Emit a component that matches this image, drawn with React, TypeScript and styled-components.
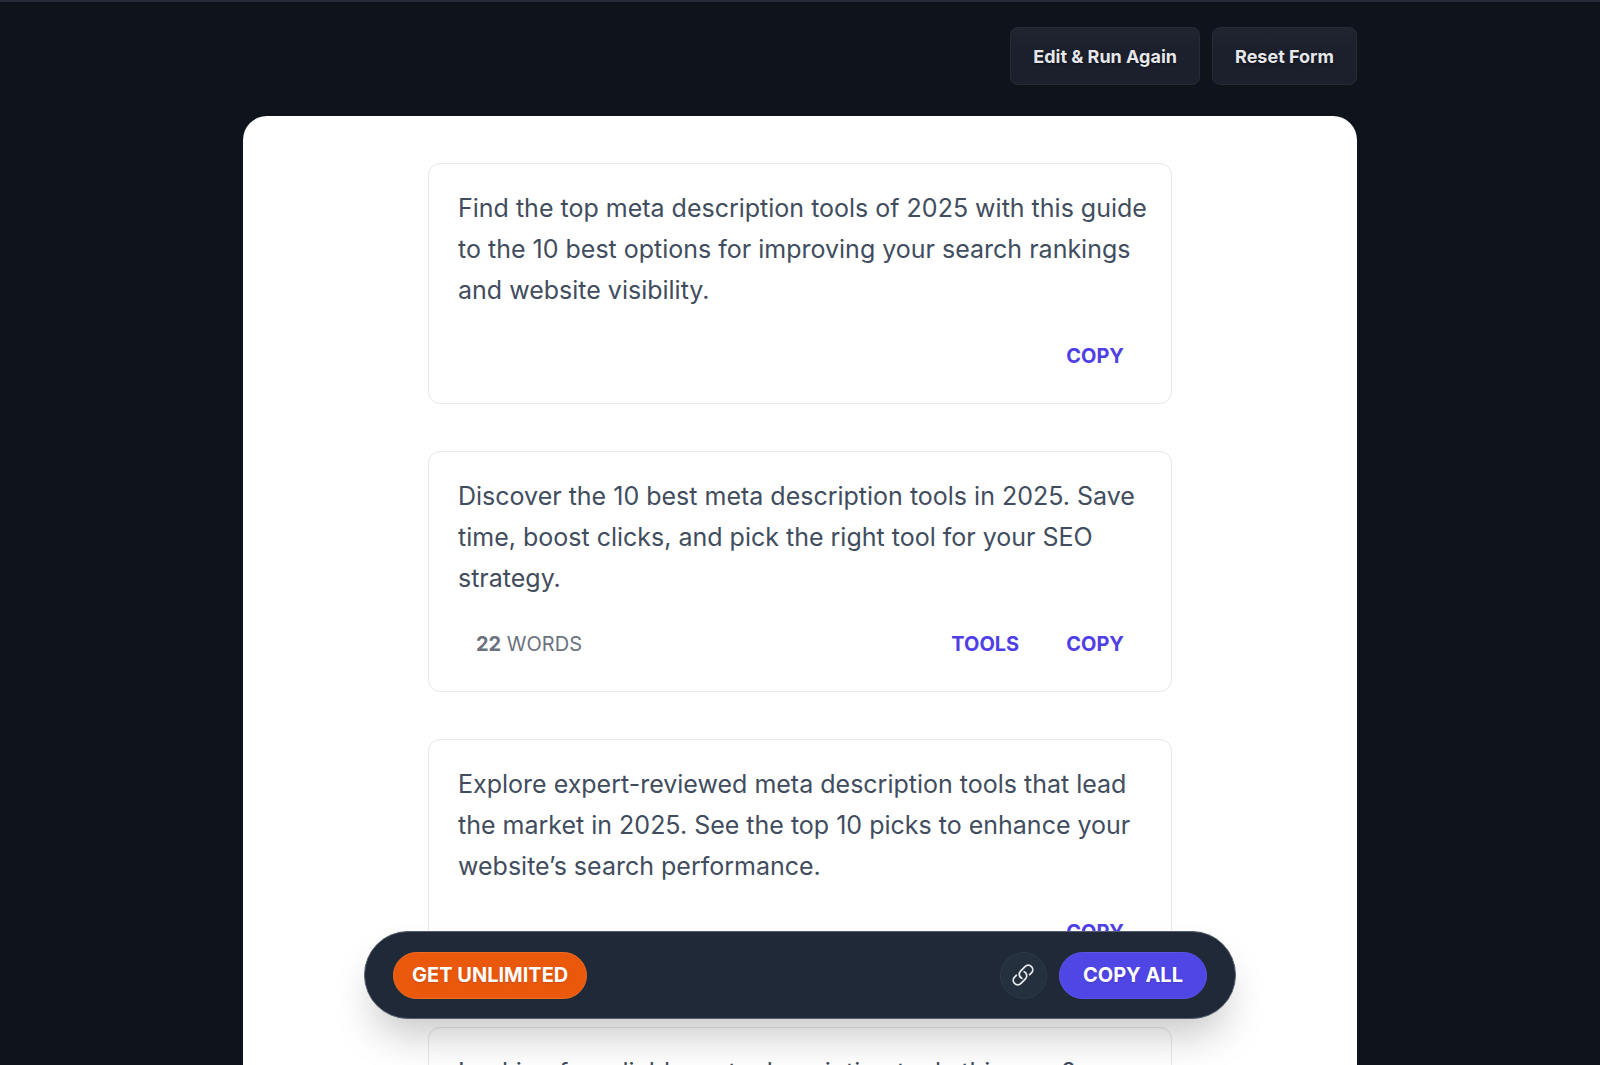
import React from "react";
import styled, { createGlobalStyle } from "styled-components";

const GlobalStyle = createGlobalStyle`
  *, *::before, *::after { box-sizing: border-box; }
  body {
    margin: 0;
    background: #0f131c;
    font-family: Inter, "Liberation Sans", sans-serif;
    -webkit-font-smoothing: antialiased;
  }
  button { font-family: inherit; cursor: pointer; }
`;

const Page = styled.main`
  height: 100vh;
  overflow: hidden;
  padding: 0 240px;
  border-top: 2px solid #262b37;
`;

const Content = styled.div`
  max-width: 1114px;
  margin: 0 auto;
`;

const Toolbar = styled.div`
  display: flex;
  justify-content: flex-end;
  gap: 12px;
  padding: 25px 0 31px;
`;

const ToolbarButton = styled.button`
  height: 58px;
  padding: 0 22px;
  border: 1px solid #262b36;
  border-radius: 8px;
  background: linear-gradient(#20242f, #1b202c 40%);
  color: #e5e7eb;
  font-size: 18px;
  font-weight: 700;
  text-shadow: 0 1px 2px rgba(0, 0, 0, 0.6);
`;

const Panel = styled.section`
  display: flex;
  justify-content: center;
  padding: 47px 48px;
  border-radius: 24px;
  background: #fff;
`;

const Results = styled.ul`
  display: flex;
  flex-direction: column;
  gap: 47px;
  width: 100%;
  max-width: 744px;
  margin: 0;
  padding: 0;
  list-style: none;
`;

const Card = styled.li`
  padding: 24px 20px 25px 29px;
  border: 1px solid #e5e7eb;
  border-radius: 12px;
`;

const Description = styled.p`
  margin: 0;
  color: #414d5e;
  font-size: 25px;
  line-height: 41px;
`;

const CardFooter = styled.div`
  display: flex;
  align-items: center;
  justify-content: space-between;
  margin-top: 22px;
  padding: 0 27px 0 18px;
  height: 45px;
`;

const WordCount = styled.span`
  color: #6b7280;
  font-size: 20px;
`;

const CardActions = styled.div`
  display: flex;
  gap: 47px;
  margin-left: auto;
`;

const TextButton = styled.button`
  padding: 0;
  border: 0;
  background: none;
  color: #4f3fe5;
  font-size: 20px;
  font-weight: 700;
`;

const ActionBar = styled.aside`
  position: fixed;
  bottom: 46px;
  left: 50%;
  transform: translateX(-50%);
  display: flex;
  align-items: center;
  gap: 12px;
  width: calc(100% - 48px);
  max-width: 872px;
  height: 88px;
  padding: 0 28px;
  border: 1px solid #565e6b;
  border-radius: 44px;
  background: #1f2937;
  box-shadow: 0 24px 40px -8px rgba(0, 0, 0, 0.22);
`;

const PillButton = styled.button<{ $tone: "orange" | "indigo"; $pad: number }>`
  height: 47px;
  padding: 0 ${(p) => p.$pad}px;
  border: 1px solid ${(p) => (p.$tone === "orange" ? "#ee6c22" : "#5d52e8")};
  border-radius: 24px;
  background: ${(p) => (p.$tone === "orange" ? "#ea580c" : "#4f46e5")};
  color: #fff;
  font-size: 20px;
  font-weight: 700;
  text-shadow: 0 1px 2px rgba(0, 0, 0, 0.15);
`;

const IconButton = styled.button`
  display: grid;
  place-items: center;
  width: 47px;
  height: 47px;
  margin-left: auto;
  padding: 0;
  border: 1px solid #2f3946;
  border-radius: 50%;
  background: #25303e;
  color: #e5e7eb;
`;

function LinkIcon() {
  return (
    <svg width="24" height="24" viewBox="0 0 24 24" fill="none" stroke="currentColor" strokeWidth="1.8" strokeLinecap="round" strokeLinejoin="round" aria-hidden="true">
      <path d="M13.19 8.688a4.5 4.5 0 0 1 1.242 7.244l-4.5 4.5a4.5 4.5 0 0 1-6.364-6.364l1.757-1.757m13.35-.622 1.757-1.757a4.5 4.5 0 0 0-6.364-6.364l-4.5 4.5a4.5 4.5 0 0 0 1.242 7.244" />
    </svg>
  );
}

type Result = { text: string; words?: number };

const results: Result[] = [
  { text: "Find the top meta description tools of 2025 with this guide to the 10 best options for improving your search rankings and website visibility." },
  { text: "Discover the 10 best meta description tools in 2025. Save time, boost clicks, and pick the right tool for your SEO strategy.", words: 22 },
  { text: "Explore expert-reviewed meta description tools that lead the market in 2025. See the top 10 picks to enhance your website’s search performance." },
  { text: "Looking for reliable meta description tools this year?" },
];

export default function App() {
  return (
    <>
      <GlobalStyle />
      <Page>
        <Content>
          <Toolbar>
            <ToolbarButton type="button">Edit &amp; Run Again</ToolbarButton>
            <ToolbarButton type="button">Reset Form</ToolbarButton>
          </Toolbar>
          <Panel>
            <Results>
              {results.map((result) => (
                <Card key={result.text}>
                  <Description>{result.text}</Description>
                  <CardFooter>
                    {result.words && (
                      <WordCount>
                        <strong>{result.words}</strong> WORDS
                      </WordCount>
                    )}
                    <CardActions>
                      {result.words && <TextButton type="button">TOOLS</TextButton>}
                      <TextButton type="button">COPY</TextButton>
                    </CardActions>
                  </CardFooter>
                </Card>
              ))}
            </Results>
          </Panel>
        </Content>
      </Page>
      <ActionBar>
        <PillButton type="button" $tone="orange" $pad={18}>GET UNLIMITED</PillButton>
        <IconButton type="button" aria-label="Copy link">
          <LinkIcon />
        </IconButton>
        <PillButton type="button" $tone="indigo" $pad={23}>COPY ALL</PillButton>
      </ActionBar>
    </>
  );
}
